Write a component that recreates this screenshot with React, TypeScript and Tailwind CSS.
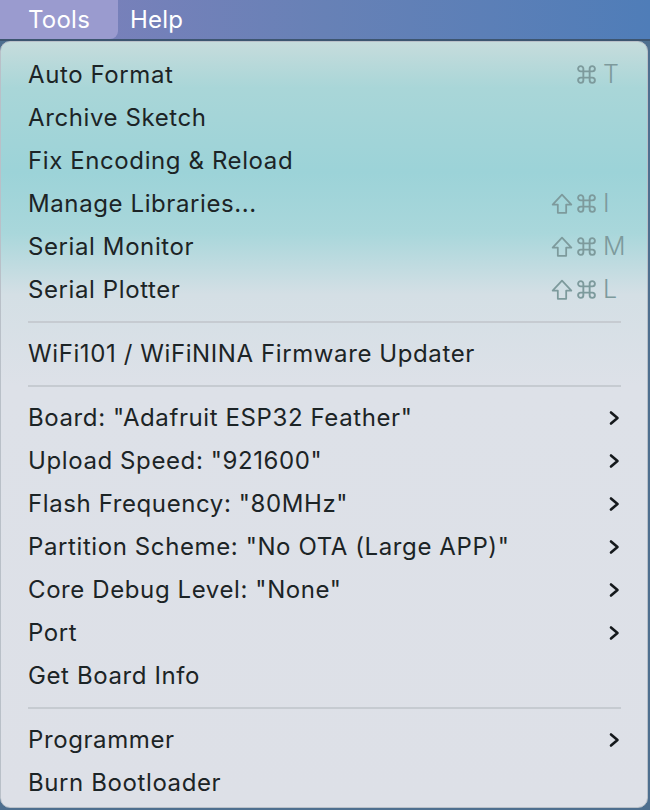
import React from "react";

type Item =
  | { kind: "item"; label: string; shortcut?: string[]; sub?: boolean }
  | { kind: "sep" };

const items: Item[] = [
  { kind: "item", label: "Auto Format", shortcut: ["", "⌘", "T"] },
  { kind: "item", label: "Archive Sketch" },
  { kind: "item", label: "Fix Encoding & Reload" },
  { kind: "item", label: "Manage Libraries...", shortcut: ["⇧", "⌘", "I"] },
  { kind: "item", label: "Serial Monitor", shortcut: ["⇧", "⌘", "M"] },
  { kind: "item", label: "Serial Plotter", shortcut: ["⇧", "⌘", "L"] },
  { kind: "sep" },
  { kind: "item", label: "WiFi101 / WiFiNINA Firmware Updater" },
  { kind: "sep" },
  { kind: "item", label: 'Board: "Adafruit ESP32 Feather"', sub: true },
  { kind: "item", label: 'Upload Speed: "921600"', sub: true },
  { kind: "item", label: 'Flash Frequency: "80MHz"', sub: true },
  { kind: "item", label: 'Partition Scheme: "No OTA (Large APP)"', sub: true },
  { kind: "item", label: 'Core Debug Level: "None"', sub: true },
  { kind: "item", label: "Port", sub: true },
  { kind: "item", label: "Get Board Info" },
  { kind: "sep" },
  { kind: "item", label: "Programmer", sub: true },
  { kind: "item", label: "Burn Bootloader" },
];

function Chevron() {
  return (
    <svg width="12" height="16" viewBox="0 0 12 16" fill="none" className="mr-[1px]">
      <polyline
        points="3,2.5 9.5,8 3,13.5"
        stroke="#15191c"
        strokeWidth="2.6"
        strokeLinecap="round"
        strokeLinejoin="round"
      />
    </svg>
  );
}

function ShiftIcon() {
  return (
    <svg width="22" height="22" viewBox="0 0 20 20" fill="none">
      <path
        d="M10 1.5 L18.5 10.5 H13.8 V18 H6.2 V10.5 H1.5 Z"
        stroke="#7d9a9c"
        strokeWidth="1.6"
        strokeLinejoin="round"
      />
    </svg>
  );
}

function CmdIcon() {
  return (
    <svg width="21" height="21" viewBox="0 0 20 20" fill="none">
      <path
        d="M7 7 H13 V13 H7 Z M7 7 V4.5 A2.5 2.5 0 1 0 4.5 7 H7 M13 7 V4.5 A2.5 2.5 0 1 1 15.5 7 H13 M7 13 V15.5 A2.5 2.5 0 1 1 4.5 13 H7 M13 13 V15.5 A2.5 2.5 0 1 0 15.5 13 H13"
        stroke="#7d9a9c"
        strokeWidth="1.8"
        strokeLinejoin="round"
      />
    </svg>
  );
}

function Shortcut({ keys }: { keys: string[] }) {
  return (
    <span className="flex items-center w-[70px] text-[#7d9a9c]">
      <span className="w-[25px] flex items-center justify-start">{keys[0] === "⇧" ? <ShiftIcon /> : null}</span>
      <span className="w-[25px] flex items-center justify-start"><CmdIcon /></span>
      <span className="w-[20px] text-[25px] leading-none font-['Inter'] font-light text-left pl-[2px]">{keys[2]}</span>
    </span>
  );
}

export default function App() {
  return (
    <div className="w-[650px] h-[810px] overflow-hidden bg-[#4e6f8f] font-['Inter',sans-serif]">
      <div className="h-[41px] flex items-stretch bg-gradient-to-r from-[#7f80bc] via-[#6781b6] to-[#4f7db8] border-b-2 border-[#3d5570]">
        <div className="w-[118px] bg-[#9a9bcf] rounded-br-[8px] flex items-center pl-[28px] text-[24px] tracking-[0.01em] text-white">
          Tools
        </div>
        <div className="flex items-center pl-[12px] text-[24px] tracking-[0.01em] text-white">Help</div>
      </div>
      <div className="h-[767px] mr-[2px] rounded-[10px] border border-[#b9c0c8] bg-[linear-gradient(180deg,#c6dcdc_0%,#a9d6d8_6%,#9cd3d8_17%,#a9d7db_25%,#d4dfe5_33%,#dde1e8_45%,#dde0e7_100%)] pt-[11px] pl-[27px] pr-[26px]">
        {items.map((it, i) =>
          it.kind === "sep" ? (
            <div key={i} className="h-[21px] flex items-center">
              <div className="w-full h-[2px] bg-[#c6cbd1]" />
            </div>
          ) : (
            <div key={i} className="h-[43px] flex items-center justify-between text-[24px] tracking-[0.025em] text-[#1c2426]">
              <span>{it.label}</span>
              {it.shortcut ? <Shortcut keys={it.shortcut} /> : null}
              {it.sub ? <Chevron /> : null}
            </div>
          )
        )}
      </div>
    </div>
  );
}
